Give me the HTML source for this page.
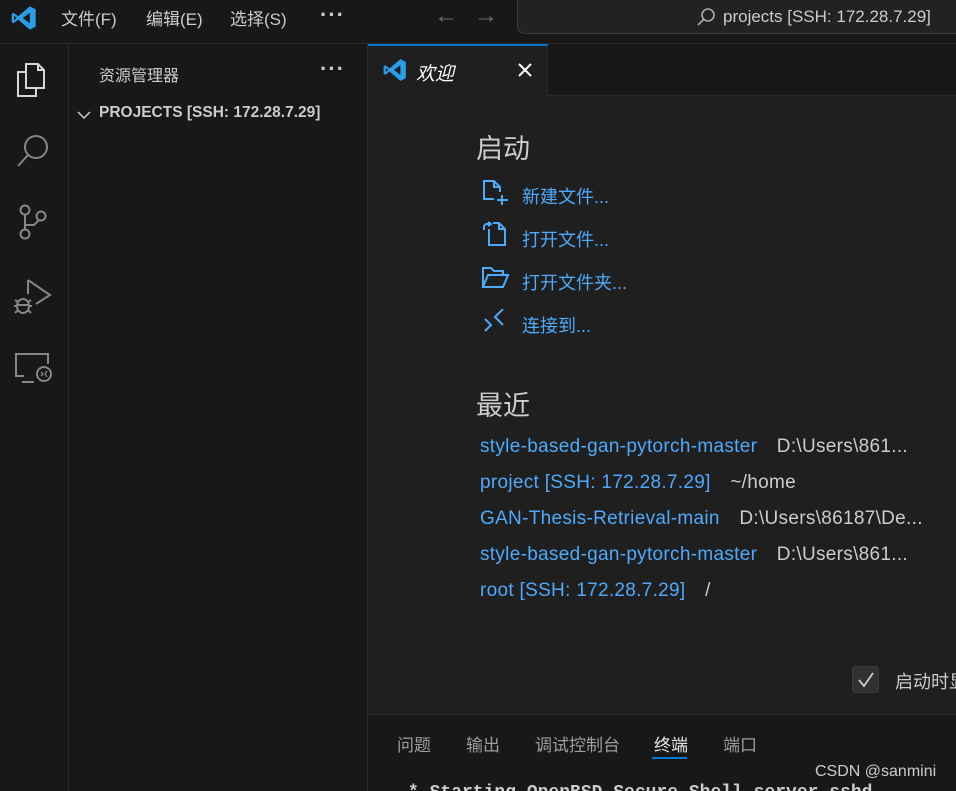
<!DOCTYPE html>
<html style="overflow:hidden"><head><meta charset="utf-8">
<style>
*{margin:0;padding:0;box-sizing:border-box}
html,body{width:956px;height:791px;overflow:hidden}
body{background:#1f1f1f;font-family:"Liberation Sans","Noto Sans CJK SC",sans-serif;color:#ccc;position:relative}
.a{position:absolute}
.title{left:0;top:0;width:956px;height:44px;background:#181818;border-bottom:1px solid #2b2b2b}
.menu{top:5px;font-size:17px;color:#ccc}
.act{left:0;top:44px;width:69px;height:747px;background:#181818;border-right:1px solid #2b2b2b}
.side{left:69px;top:44px;width:299px;height:747px;background:#181818;border-right:1px solid #2b2b2b}
.tabbar{left:368px;top:44px;width:588px;height:52px;background:#181818;border-bottom:1px solid #2b2b2b}
.tab{left:368px;top:44px;width:180px;height:53px;background:#1f1f1f;border-top:2px solid #0078d4;border-right:1px solid #2b2b2b}
.link{color:#4daafc;font-size:18px}
.rec{font-size:19px;letter-spacing:0.3px;white-space:nowrap}
.rec span{color:#ccc}
.panel{left:368px;top:714px;width:588px;height:77px;background:#181818;border-top:1px solid #2b2b2b;overflow:hidden}
.pt{top:731px;font-size:17px;color:#9d9d9d}
.dots{font-size:22px;font-weight:bold;letter-spacing:1px}
</style></head><body>
<div class="a title"></div>
<svg class="a" style="left:10px;top:4px" width="28" height="28" viewBox="0 0 24 24"><path d="M17 2 L22 4.5 V19.5 L17 22 L7 13.5 L3 16.5 L1.5 15.5 V8.5 L3 7.5 L7 10.5 Z M17 7.5 L11 12 L17 16.5 Z M3.5 10 V14 L5.7 12 Z" fill="#2a9ee8" fill-rule="evenodd"/></svg>
<div class="a menu" style="left:61px">文件(F)</div>
<div class="a menu" style="left:146px">编辑(E)</div>
<div class="a menu" style="left:230px">选择(S)</div>
<div class="a dots" style="left:320px;top:2px;color:#ccc">···</div>
<div class="a" style="left:434px;top:2px;font-size:24px;color:#6e6e6e">←</div>
<div class="a" style="left:474px;top:2px;font-size:24px;color:#6e6e6e">→</div>
<div class="a" style="left:517px;top:0px;width:460px;height:34px;border:1px solid #3c3c3c;border-top:none;border-radius:0 0 8px 8px;background:#222"></div>
<svg class="a" style="left:695px;top:6px" width="22" height="22" viewBox="0 0 22 22"><circle cx="13" cy="9" r="6" stroke="#aaa" stroke-width="1.6" fill="none"/><path d="M9 13 L3 19" stroke="#aaa" stroke-width="1.6"/></svg>
<div class="a" style="left:723px;top:7px;font-size:17px;color:#ccc">projects [SSH: 172.28.7.29]</div>

<div class="a act"></div>
<svg class="a" style="left:14px;top:60px" width="36" height="40" viewBox="0 0 36 40" fill="none" stroke="#d7d7d7" stroke-width="2"><path d="M12 4 H24 L30 10 V28 H12 Z M24 4 V10 H30"/><path d="M12 12 H4 V36 H22 V28"/></svg>
<svg class="a" style="left:14px;top:132px" width="40" height="40" fill="none" stroke="#868686" stroke-width="2"><circle cx="22" cy="15" r="11"/><path d="M14 23 L4 34"/></svg>
<svg class="a" style="left:14px;top:200px" width="40" height="46" fill="none" stroke="#868686" stroke-width="2"><circle cx="11" cy="10" r="4.5"/><circle cx="27" cy="16" r="4.5"/><circle cx="11" cy="34" r="4.5"/><path d="M11 15 V29 M11 25 H20 L25 20"/></svg>
<svg class="a" style="left:12px;top:276px" width="44" height="42" fill="none" stroke="#868686" stroke-width="2"><path d="M16 4 V18 M16 4 L38 19 L24 28"/><ellipse cx="11" cy="30" rx="6" ry="7"/><path d="M3 24 L6 26 M19 24 L16 26 M2 30 H5 M17 30 H20 M3 37 L6 34 M19 37 L16 34 M5 29 H17"/></svg>
<svg class="a" style="left:14px;top:352px" width="40" height="36" fill="none" stroke="#868686" stroke-width="2"><path d="M24 2 H34 V12 M10 24 H2 V2 H26"/><path d="M8 30 H20"/><circle cx="30" cy="22" r="7"/><path d="M27 20 L29 22 L27 24 M33 19 L31 22 L33 25" stroke-width="1.3"/></svg>

<div class="a side"></div>
<div class="a" style="left:99px;top:62px;font-size:16px;color:#ccc">资源管理器</div>
<div class="a dots" style="left:320px;top:56px;color:#ccc">···</div>
<svg class="a" style="left:76px;top:108px" width="16" height="14" fill="none" stroke="#ccc" stroke-width="1.5"><path d="M2 4 L8 10 L14 4"/></svg>
<div class="a" style="left:99px;top:104px;font-size:15.5px;font-weight:bold;color:#ccc">PROJECTS [SSH: 172.28.7.29]</div>

<div class="a tabbar"></div>
<div class="a tab"></div>
<svg class="a" style="left:382px;top:57px" width="26" height="26" viewBox="0 0 24 24"><path d="M17 2 L22 4.5 V19.5 L17 22 L7 13.5 L3 16.5 L1.5 15.5 V8.5 L3 7.5 L7 10.5 Z M17 7.5 L11 12 L17 16.5 Z M3.5 10 V14 L5.7 12 Z" fill="#2a9ee8" fill-rule="evenodd"/></svg>
<div class="a" style="left:416px;top:59px;font-size:19px;font-style:italic;color:#fff">欢迎</div>
<svg class="a" style="left:517px;top:62px" width="16" height="16" stroke="#fff" stroke-width="2"><path d="M2 2 L14 14 M14 2 L2 14"/></svg>

<div class="a" style="left:476px;top:127px;font-size:27px;color:#ccc">启动</div>
<svg class="a" style="left:482px;top:179px" width="28" height="28" fill="none" stroke="#4daafc" stroke-width="2"><path d="M12 20 H2 V2 H12 L18 8 V13 M12 2 V8 H18 M20 16 V26 M15 21 H26"/></svg>
<div class="a link" style="left:522px;top:183px">新建文件...</div>
<svg class="a" style="left:481px;top:221px" width="28" height="28" fill="none" stroke="#4daafc" stroke-width="2"><path d="M8 8 V24 H24 V8 L18 2 H12 M18 2 V8 H24 M3 9 V6 A3 3 0 0 1 6 3 H10 M7 1 L10 3 L7 5"/></svg>
<div class="a link" style="left:522px;top:226px">打开文件...</div>
<svg class="a" style="left:481px;top:265px" width="30" height="26" fill="none" stroke="#4daafc" stroke-width="2"><path d="M2 22 V3 H10 L13 6 H22 V10 M2 22 L7 10 H27 L22 22 Z"/></svg>
<div class="a link" style="left:522px;top:269px">打开文件夹...</div>
<svg class="a" style="left:483px;top:309px" width="24" height="24" fill="none" stroke="#4daafc" stroke-width="2"><path d="M2 12 L8 18 L2 24 M20 2 L12 10 L20 18" transform="translate(0,-2)"/></svg>
<div class="a link" style="left:522px;top:312px">连接到...</div>

<div class="a" style="left:476px;top:384px;font-size:27px;color:#ccc">最近</div>
<div class="a rec link" style="left:480px;top:436px">style-based-gan-pytorch-master <span style="margin-left:14px">D:\Users\861...</span></div>
<div class="a rec link" style="left:480px;top:472px">project [SSH: 172.28.7.29] <span style="margin-left:14px">~/home</span></div>
<div class="a rec link" style="left:480px;top:508px">GAN-Thesis-Retrieval-main <span style="margin-left:14px">D:\Users\86187\De...</span></div>
<div class="a rec link" style="left:480px;top:544px">style-based-gan-pytorch-master <span style="margin-left:14px">D:\Users\861...</span></div>
<div class="a rec link" style="left:480px;top:580px">root [SSH: 172.28.7.29] <span style="margin-left:14px">/</span></div>

<div class="a" style="left:852px;top:666px;width:27px;height:27px;background:#313131;border:1px solid #3c3c3c;border-radius:4px"></div>
<svg class="a" style="left:856px;top:670px" width="20" height="20" fill="none" stroke="#ccc" stroke-width="1.8"><path d="M3 10 L8 16 L17 3"/></svg>
<div class="a" style="left:895px;top:668px;font-size:18px;color:#ccc;white-space:nowrap">启动时显示</div>

<div class="a panel">
<div class="a" style="left:40px;top:68px;font-family:'Liberation Mono',monospace;font-size:18px;font-weight:bold;color:#ccc;white-space:nowrap">* Starting OpenBSD Secure Shell server sshd</div>
</div>
<div class="a pt" style="left:397px">问题</div>
<div class="a pt" style="left:466px">输出</div>
<div class="a pt" style="left:535px">调试控制台</div>
<div class="a pt" style="left:654px;color:#e7e7e7">终端</div>
<div class="a" style="left:652px;top:757px;width:35px;height:2px;background:#0078d4"></div>
<div class="a pt" style="left:723px">端口</div>
<div class="a" style="left:815px;top:763px;font-size:16px;color:#ccc">CSDN @sanmini</div>
</body></html>
